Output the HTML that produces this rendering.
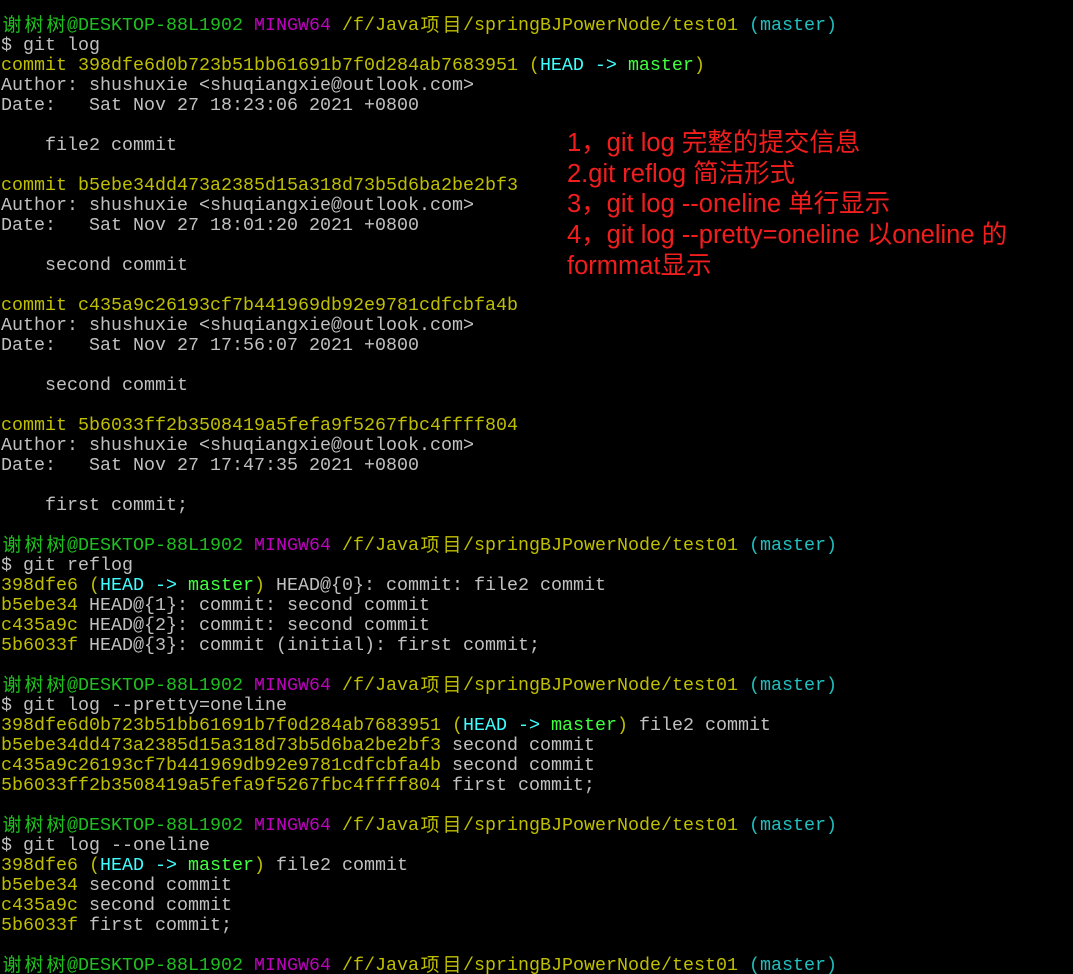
<!DOCTYPE html>
<html><head><meta charset="utf-8"><style>
html,body{margin:0;background:#000;width:1073px;height:974px;overflow:hidden}
pre{margin:0;padding:16px 0 0 1px;font:18.33px/20px "Liberation Mono","Noto Sans CJK SC",monospace;color:#c0c0c0;white-space:pre}
.g{color:#1fbf1f}.y{color:#bfbf00}.m{color:#bf00bf}.c{color:#20bfbf}.hc{color:#40ffff}.hg{color:#40ff40}
.z{display:inline-block;width:22px;height:20px;line-height:20px;vertical-align:top;position:relative;top:-2px;font-family:"Noto Sans CJK SC",sans-serif;font-size:19px;text-align:center}
.note{position:absolute;left:567px;top:128px;color:#f21e1e;font:25.5px/30.7px "Liberation Sans","Noto Sans CJK SC",sans-serif;white-space:nowrap}
</style></head><body>
<pre><span class="g"><span class="z">谢</span><span class="z">树</span><span class="z">树</span>@DESKTOP-88L1902</span> <span class="m">MINGW64</span> <span class="y">/f/Java<span class="z">项</span><span class="z">目</span>/springBJPowerNode/test01</span> <span class="c">(master)</span>
$ git log
<span class="y">commit 398dfe6d0b723b51bb61691b7f0d284ab7683951 (</span><span class="hc">HEAD -&gt; </span><span class="hg">master</span><span class="y">)</span>
Author: shushuxie &lt;shuqiangxie@outlook.com&gt;
Date:   Sat Nov 27 18:23:06 2021 +0800

    file2 commit

<span class="y">commit b5ebe34dd473a2385d15a318d73b5d6ba2be2bf3</span>
Author: shushuxie &lt;shuqiangxie@outlook.com&gt;
Date:   Sat Nov 27 18:01:20 2021 +0800

    second commit

<span class="y">commit c435a9c26193cf7b441969db92e9781cdfcbfa4b</span>
Author: shushuxie &lt;shuqiangxie@outlook.com&gt;
Date:   Sat Nov 27 17:56:07 2021 +0800

    second commit

<span class="y">commit 5b6033ff2b3508419a5fefa9f5267fbc4ffff804</span>
Author: shushuxie &lt;shuqiangxie@outlook.com&gt;
Date:   Sat Nov 27 17:47:35 2021 +0800

    first commit;

<span class="g"><span class="z">谢</span><span class="z">树</span><span class="z">树</span>@DESKTOP-88L1902</span> <span class="m">MINGW64</span> <span class="y">/f/Java<span class="z">项</span><span class="z">目</span>/springBJPowerNode/test01</span> <span class="c">(master)</span>
$ git reflog
<span class="y">398dfe6 (</span><span class="hc">HEAD -&gt; </span><span class="hg">master</span><span class="y">)</span> HEAD@{0}: commit: file2 commit
<span class="y">b5ebe34</span> HEAD@{1}: commit: second commit
<span class="y">c435a9c</span> HEAD@{2}: commit: second commit
<span class="y">5b6033f</span> HEAD@{3}: commit (initial): first commit;

<span class="g"><span class="z">谢</span><span class="z">树</span><span class="z">树</span>@DESKTOP-88L1902</span> <span class="m">MINGW64</span> <span class="y">/f/Java<span class="z">项</span><span class="z">目</span>/springBJPowerNode/test01</span> <span class="c">(master)</span>
$ git log --pretty=oneline
<span class="y">398dfe6d0b723b51bb61691b7f0d284ab7683951 (</span><span class="hc">HEAD -&gt; </span><span class="hg">master</span><span class="y">)</span> file2 commit
<span class="y">b5ebe34dd473a2385d15a318d73b5d6ba2be2bf3</span> second commit
<span class="y">c435a9c26193cf7b441969db92e9781cdfcbfa4b</span> second commit
<span class="y">5b6033ff2b3508419a5fefa9f5267fbc4ffff804</span> first commit;

<span class="g"><span class="z">谢</span><span class="z">树</span><span class="z">树</span>@DESKTOP-88L1902</span> <span class="m">MINGW64</span> <span class="y">/f/Java<span class="z">项</span><span class="z">目</span>/springBJPowerNode/test01</span> <span class="c">(master)</span>
$ git log --oneline
<span class="y">398dfe6 (</span><span class="hc">HEAD -&gt; </span><span class="hg">master</span><span class="y">)</span> file2 commit
<span class="y">b5ebe34</span> second commit
<span class="y">c435a9c</span> second commit
<span class="y">5b6033f</span> first commit;

<span class="g"><span class="z">谢</span><span class="z">树</span><span class="z">树</span>@DESKTOP-88L1902</span> <span class="m">MINGW64</span> <span class="y">/f/Java<span class="z">项</span><span class="z">目</span>/springBJPowerNode/test01</span> <span class="c">(master)</span></pre>
<div class="note">1，git log 完整的提交信息<br>2.git reflog 简洁形式<br>3，git log --oneline 单行显示<br>4，git log --pretty=oneline 以oneline 的<br>formmat显示</div>
</body></html>
